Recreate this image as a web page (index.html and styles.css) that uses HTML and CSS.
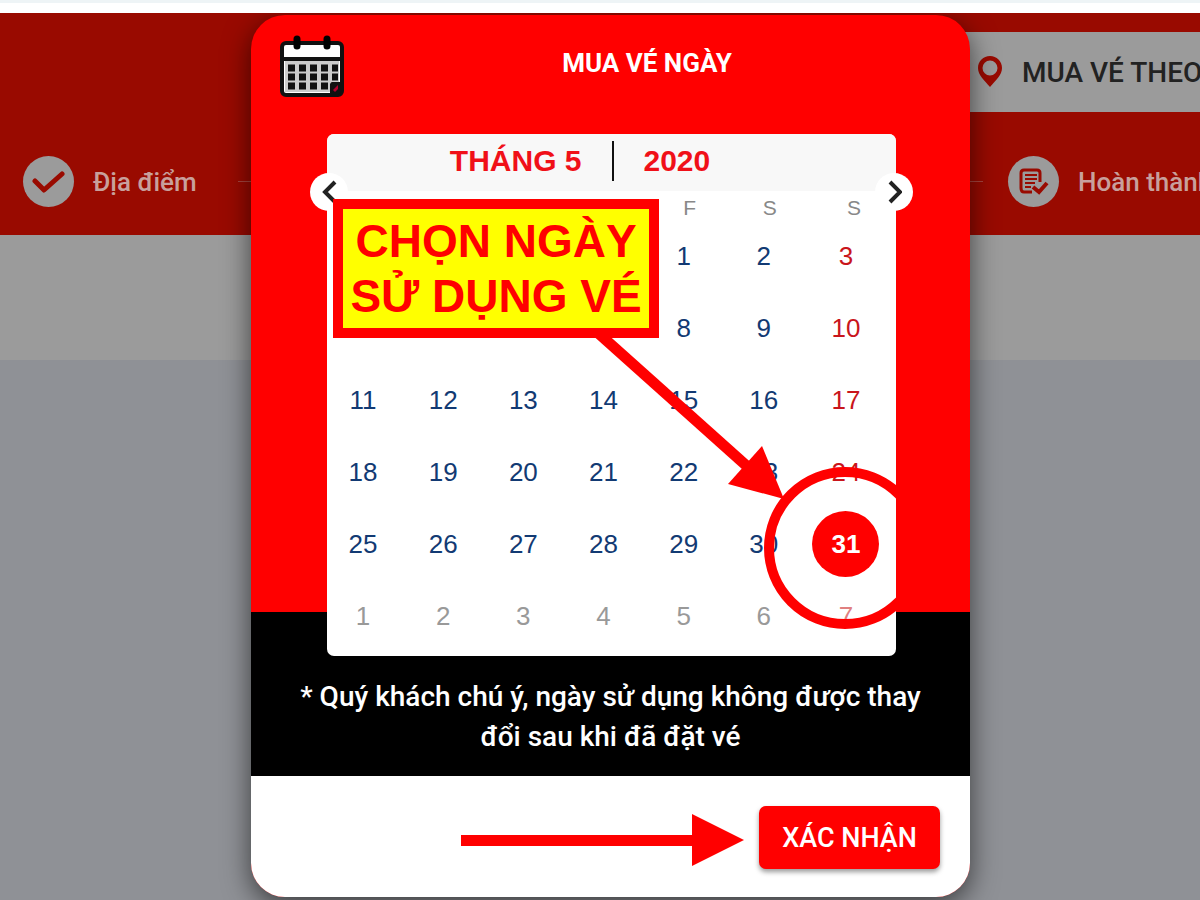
FILE: index.html
```
<!DOCTYPE html>
<html lang="vi">
<head>
  <meta charset="UTF-8">
  <meta name="viewport" content="width=device-width, initial-scale=1">
  <title>Mua vé ngày</title>
  <link rel="stylesheet" href="styles.css">
</head>
<body>
  <div class="top-bar"></div>
  <header class="page-header">
    <div class="tabs">
      <a href="#" class="tab">
        <svg width="24" height="32" viewBox="0 0 24 32">
          <path fill="#990a00" fill-rule="evenodd" d="M12 0C5.300 0 0 5.300 0 12c0 7 6 12 12 19 6-7 12-12 12-19C24 5.300 18.700 0 12 0zm0 4.500a7.500 7.500 0 1 1 0 15 7.500 7.500 0 0 1 0-15z"/>
        </svg>
        MUA VÉ THEO
      </a>
    </div>
    <div class="steps">
      <div class="step">
        <span class="step-icon">
          <svg width="34" height="24" viewBox="0 0 34 24">
            <path d="M3 11l9 9L30 4" fill="none" stroke="#990a00" stroke-width="5" stroke-linecap="round" stroke-linejoin="round"/>
          </svg>
        </span>
        Địa điểm
      </div>
      <span class="step-line"></span>
      <div class="step step-last">
        <span class="step-icon">
          <svg width="30" height="28" viewBox="0 0 30 28" fill="none" stroke="#990a00">
            <path stroke-width="3" d="M21 14V5q0-3-3-3H5Q2 2 2 5v15q0 4 3 4h8"/>
            <path stroke-width="2" d="M6 7h12M6 11h12M6 15h10M6 19h6"/>
            <path stroke-width="4" d="M14 19l6 5 8-9"/>
          </svg>
        </span>
        Hoàn thành
      </div>
    </div>
  </header>
  <div class="page-strip"></div>

  <div class="modal-layer">
    <div class="modal">
      <div class="modal-head">
        <svg width="64" height="62" viewBox="0 0 64 62">
          <rect x="2" y="8" width="60" height="52" rx="4" fill="#fff" stroke="#111" stroke-width="4"/>
          <path d="M2 24h60" stroke="#111" stroke-width="4"/>
          <rect x="5" y="26" width="54" height="31" fill="#ccc"/>
          <path d="M17 4v7M47 4v7" stroke="#000" stroke-width="7" stroke-linecap="round"/>
          <path d="M8 33h50M8 42h50M8 51h40" stroke="#111" stroke-width="7" stroke-dasharray="7 4"/>
          <path d="M62 47H52q-1 0-2 2v11h8l4-4z" fill="#111"/>
          <path d="M53 55l5-5v4l-3 3z" fill="#b3002d"/>
        </svg>
        <h2>MUA VÉ NGÀY</h2>
      </div>

      <div class="calendar">
        <div class="calendar-head">
          <span class="month">THÁNG 5</span>
          <span class="year">2020</span>
        </div>
        <button type="button" class="nav prev" aria-label="Tháng trước">
          <svg width="16" height="24" viewBox="0 0 16 24"><path d="M14 2L4 12l10 10" fill="none" stroke="#222" stroke-width="4"/></svg>
        </button>
        <button type="button" class="nav next" aria-label="Tháng sau">
          <svg width="16" height="24" viewBox="0 0 16 24"><path d="M4 2l10 10L4 22" fill="none" stroke="#222" stroke-width="4"/></svg>
        </button>
        <table>
          <thead>
            <tr><th></th><th></th><th></th><th></th><th>F</th><th>S</th><th>S</th></tr>
          </thead>
          <tbody>
            <tr><td></td><td></td><td></td><td></td><td>1</td><td>2</td><td>3</td></tr>
            <tr><td></td><td></td><td></td><td></td><td>8</td><td>9</td><td>10</td></tr>
            <tr><td>11</td><td>12</td><td>13</td><td>14</td><td>15</td><td>16</td><td>17</td></tr>
            <tr><td>18</td><td>19</td><td>20</td><td>21</td><td>22</td><td>23</td><td>24</td></tr>
            <tr><td>25</td><td>26</td><td>27</td><td>28</td><td>29</td><td>30</td><td><span class="selected">31</span></td></tr>
            <tr class="other"><td>1</td><td>2</td><td>3</td><td>4</td><td>5</td><td>6</td><td>7</td></tr>
          </tbody>
        </table>
        <svg class="pointer" viewBox="0 0 569 522">
          <path d="M270 198L422 334" stroke="#f00" stroke-width="11"/>
          <path d="M435 312L401 350L457 365z" fill="#f00"/>
          <circle cx="518" cy="414" r="76" fill="none" stroke="#f00" stroke-width="10"/>
        </svg>
        <div class="callout">CHỌN NGÀY<br>SỬ DỤNG VÉ</div>
      </div>

      <p class="notice">* Quý khách chú ý, ngày sử dụng không được thay đổi sau khi đã đặt vé</p>

      <div class="modal-foot">
        <svg width="283" height="56" viewBox="0 0 283 56">
          <path d="M0 25h231V4l52 26-52 26V36H0z" fill="#f00"/>
        </svg>
        <button type="button" class="confirm">XÁC NHẬN</button>
      </div>
    </div>
  </div>
</body>
</html>
```
FILE: styles.css
```
* {
  box-sizing: border-box;
}

body {
  margin: 0;
  min-height: 100vh;
  position: relative;
  overflow: hidden;
  background: #8f9196;
  font-family: Roboto, sans-serif;
}

.top-bar {
  position: relative;
  z-index: 2;
  height: 13px;
  border-top: 3px solid #eef4f6;
  background: #fff;
}

.page-header {
  height: 222px;
  padding-top: 19px;
  background: #990a00;
  overflow: hidden;
}

.tabs {
  display: flex;
  justify-content: flex-end;
}

.tab {
  display: flex;
  align-items: center;
  gap: 20px;
  width: 260px;
  height: 80px;
  padding-left: 38px;
  background: #9b9b9b;
  color: #222;
  font-size: 28px;
  font-weight: 500;
  white-space: nowrap;
  text-decoration: none;
}

.tab svg {
  flex: none;
}

.steps {
  display: flex;
  align-items: center;
  margin-top: 44px;
  padding-left: 23px;
}

.step {
  display: flex;
  align-items: center;
  gap: 19px;
  color: #c8a09c;
  font-size: 26px;
  font-weight: 500;
  white-space: nowrap;
}

.step-last {
  width: 192px;
}

.step-icon {
  flex: none;
  display: flex;
  align-items: center;
  justify-content: center;
  width: 51px;
  height: 51px;
  border-radius: 50%;
  background: #9b9b9b;
}

.step-line {
  flex: 1;
  height: 1px;
  margin: 0 25px 0 41px;
  background: #a8453f;
}

.page-strip {
  height: 125px;
  background: #9b9b9b;
}

.modal-layer {
  position: absolute;
  top: 15px;
  left: 0;
  right: 0;
  display: flex;
  justify-content: center;
  padding-left: 21px;
}

.modal {
  width: 100%;
  max-width: 719px;
  border-radius: 34px;
  overflow: hidden;
  background: #f00;
  box-shadow: 0 8px 28px rgba(0, 0, 0, 0.6);
}

.modal-head {
  display: flex;
  align-items: center;
  padding: 20px 20px 37px 29px;
}

.modal-head h2 {
  flex: 1;
  margin: 0 0 6px;
  color: #fff;
  font-size: 26px;
  font-weight: bold;
  text-align: center;
}

.calendar {
  position: relative;
  z-index: 1;
  margin: 0 74px -44px 76px;
  padding-bottom: 3px;
  border-radius: 7px;
  background: #fff;
  font-family: "Liberation Sans", Arial, sans-serif;
}

.calendar-head {
  display: flex;
  height: 57px;
  padding: 7px 0 0 4px;
  border-radius: 7px 7px 0 0;
  background: #f8f8f8;
  color: #f01018;
  font-size: 30px;
  font-weight: bold;
  line-height: 40px;
}

.month {
  width: 50%;
  height: 40px;
  padding-right: 30px;
  border-right: 2px solid #111;
  text-align: right;
}

.year {
  padding-left: 30px;
}

.nav {
  position: absolute;
  top: 39px;
  display: flex;
  align-items: center;
  justify-content: center;
  width: 38px;
  height: 38px;
  padding: 0;
  border: none;
  border-radius: 50%;
  background: #fff;
  cursor: pointer;
}

.prev {
  left: -17px;
}

.next {
  right: -17px;
}

table {
  width: calc(100% - 8px);
  table-layout: fixed;
  border-collapse: collapse;
}

th {
  height: 30px;
  padding: 4px 0 0 4px;
  color: #888;
  font-size: 21px;
  font-weight: normal;
}

th:last-child {
  padding-left: 12px;
}

td {
  height: 72px;
  padding: 0 8px 2px 0;
  color: #123a73;
  font-size: 26px;
  text-align: center;
}

td:last-child {
  padding-right: 4px;
  color: #c9151b;
}

.other td {
  color: #999;
}

.other td:last-child {
  color: #e08080;
}

.selected {
  display: inline-block;
  width: 67px;
  border-radius: 50%;
  background: #f00;
  color: #fff;
  font-weight: bold;
  line-height: 66px;
}

.pointer {
  position: absolute;
  top: 0;
  left: 0;
  width: 100%;
  overflow: hidden;
}

.callout {
  position: absolute;
  top: 65px;
  left: 6px;
  width: 326px;
  padding: 5px 0 4px;
  border: 10px solid #f00;
  background: #ff0;
  color: #f00;
  font-size: 46px;
  font-weight: bold;
  line-height: 55px;
  text-align: center;
  white-space: nowrap;
}

.notice {
  margin: 0;
  padding: 65px 40px 19px;
  background: #000;
  color: #fff;
  font-size: 28px;
  font-weight: 500;
  line-height: 40px;
  text-align: center;
}

.modal-foot {
  display: flex;
  align-items: center;
  justify-content: flex-end;
  gap: 15px;
  padding: 30px 30px 28px;
  background: #fff;
}

.confirm {
  width: 181px;
  height: 63px;
  border: none;
  border-radius: 7px;
  background: #f00;
  box-shadow: 0 3px 5px rgba(0, 0, 0, 0.4);
  color: #fff;
  font-family: inherit;
  font-size: 27px;
  font-weight: 500;
  cursor: pointer;
}

@media (max-width: 600px) {
  .calendar {
    margin-left: 20px;
    margin-right: 20px;
  }
}
```
